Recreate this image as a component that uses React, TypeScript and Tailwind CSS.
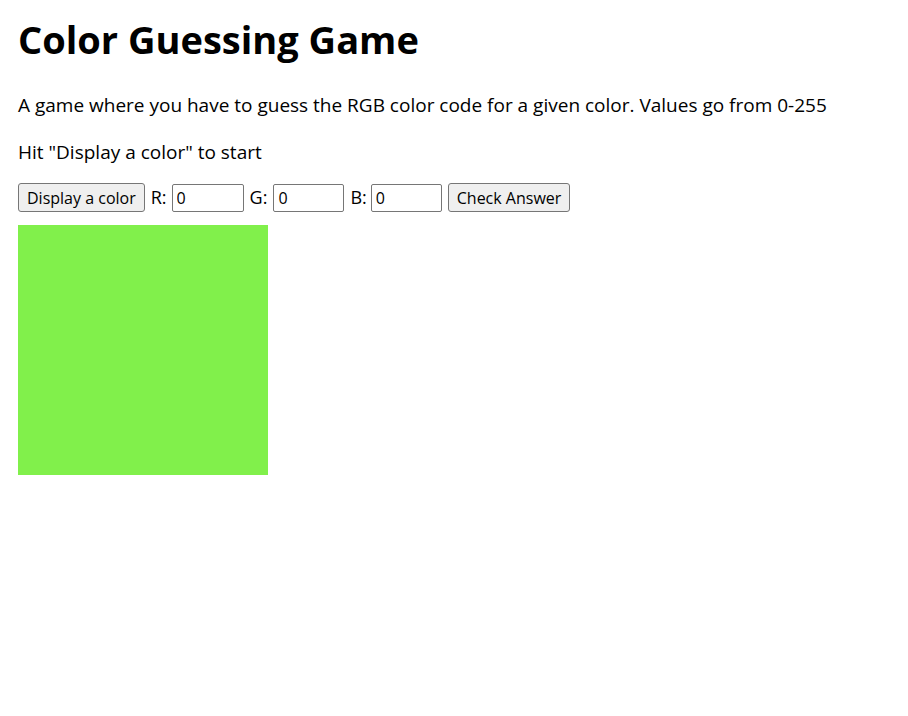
import React, { useState } from "react";

const App = () => {
  const [r, setR] = useState("0");
  const [g, setG] = useState("0");
  const [b, setB] = useState("0");

  return (
    <div className="min-h-screen bg-white text-black px-[18px] pt-[16px] font-['Open_Sans',sans-serif]">
      <h1 className="text-[38px] leading-[46px] font-bold">Color Guessing Game</h1>
      <p className="text-[19px] leading-[24px] mt-[31px]">
        A game where you have to guess the RGB color code for a given color. Values go from 0-255
      </p>
      <p className="text-[19px] leading-[24px] mt-[23px]">Hit "Display a color" to start</p>
      <div className="flex items-center mt-[19px] text-[18px]">
        <button className="h-[29px] px-[8px] border border-[#767676] rounded-[3px] bg-[#efefef] text-[16px]">
          Display a color
        </button>
        <span className="ml-[6px] mr-[5px]">R:</span>
        <input
          value={r}
          onChange={(e) => setR(e.target.value)}
          className="w-[72px] h-[28px] border border-[#767676] rounded-[2px] px-[4px] text-[16px]"
        />
        <span className="ml-[6px] mr-[6px]">G:</span>
        <input
          value={g}
          onChange={(e) => setG(e.target.value)}
          className="w-[71px] h-[28px] border border-[#767676] rounded-[2px] px-[4px] text-[16px]"
        />
        <span className="ml-[6px] mr-[4px]">B:</span>
        <input
          value={b}
          onChange={(e) => setB(e.target.value)}
          className="w-[71px] h-[28px] border border-[#767676] rounded-[2px] px-[4px] text-[16px]"
        />
        <button className="ml-[6px] h-[29px] px-[8px] border border-[#767676] rounded-[3px] bg-[#efefef] text-[16px]">
          Check Answer
        </button>
      </div>
      <div className="w-[250px] h-[250px] mt-[13px] bg-[#81f04b]" />
    </div>
  );
};

export default App;
